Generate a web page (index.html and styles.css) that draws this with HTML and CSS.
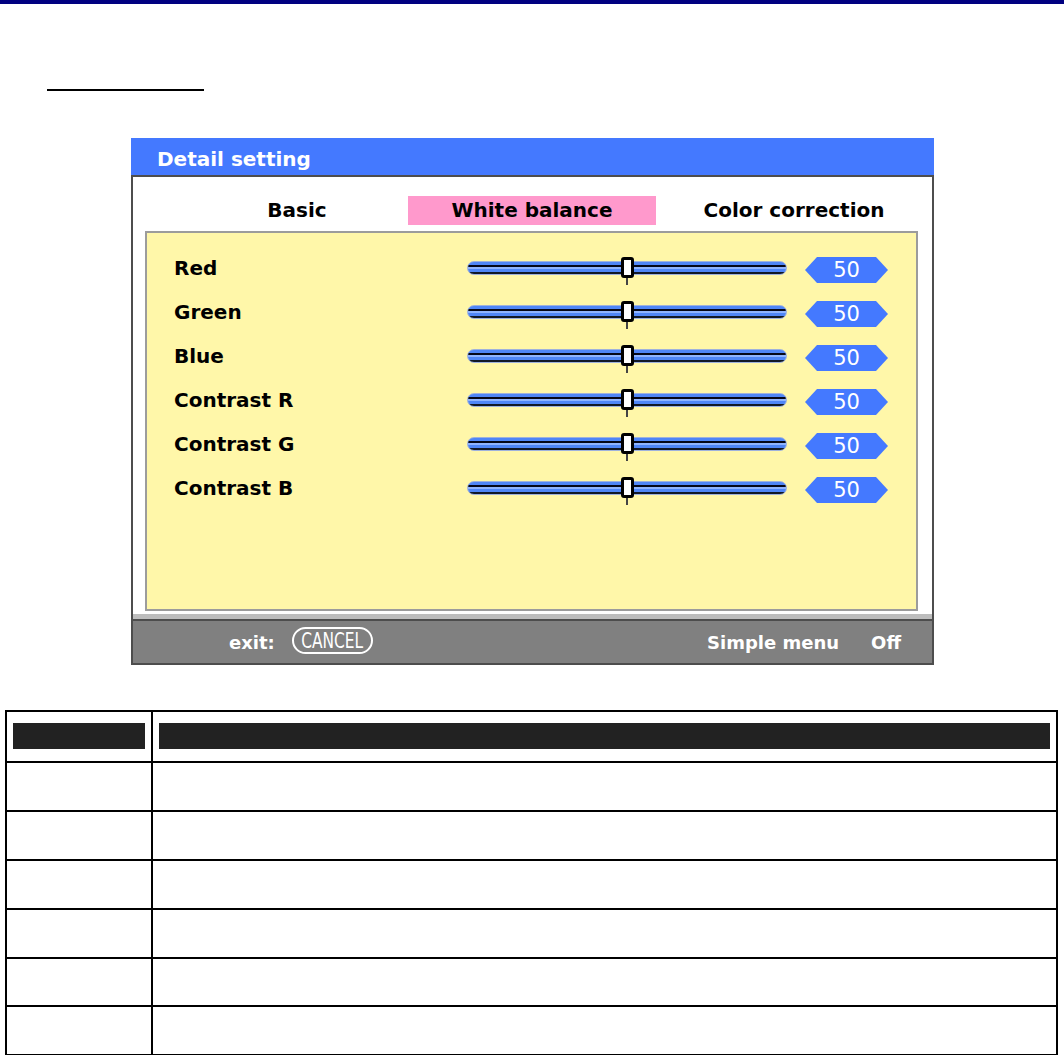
FILE: index.html
```html
<!DOCTYPE html>
<html lang="en">
<head>
    <meta charset="UTF-8">
    <meta name="viewport" content="width=device-width, initial-scale=1.0">
    <title>Detail setting - White balance</title>
    <link rel="stylesheet" href="styles.css">
</head>

<body>

    <!-- Page top rule -->
    <div class="top-bar"></div>

    <!-- Section heading (underline only) -->
    <div class="page-title"></div>

    <!-- OSD menu screen -->
    <div class="osd">
        <div class="osd-title">Detail setting</div>

        <div class="osd-body">
            <!-- Tabs -->
            <div class="tabs">
                <div class="tab tab-basic">Basic</div>
                <div class="tab tab-active">White balance</div>
                <div class="tab tab-color">Color correction</div>
            </div>

            <!-- Adjustment panel -->
            <div class="panel">
                <div class="row">
                    <div class="row-label">Red</div>
                    <div class="slider"><span class="thumb"></span></div>
                    <div class="value">50</div>
                </div>
                <div class="row">
                    <div class="row-label">Green</div>
                    <div class="slider"><span class="thumb"></span></div>
                    <div class="value">50</div>
                </div>
                <div class="row">
                    <div class="row-label">Blue</div>
                    <div class="slider"><span class="thumb"></span></div>
                    <div class="value">50</div>
                </div>
                <div class="row">
                    <div class="row-label">Contrast R</div>
                    <div class="slider"><span class="thumb"></span></div>
                    <div class="value">50</div>
                </div>
                <div class="row">
                    <div class="row-label">Contrast G</div>
                    <div class="slider"><span class="thumb"></span></div>
                    <div class="value">50</div>
                </div>
                <div class="row">
                    <div class="row-label">Contrast B</div>
                    <div class="slider"><span class="thumb"></span></div>
                    <div class="value">50</div>
                </div>
            </div>

            <div class="osd-sep"></div>

            <!-- Footer -->
            <div class="osd-footer">
                <span>exit:</span>
                <span class="cancel-btn"><span class="cancel-text">CANCEL</span></span>
                <span class="spacer"></span>
                <span>Simple menu</span>
                <span class="footer-value">Off</span>
            </div>
        </div>
    </div>

    <!-- Description table -->
    <div class="spec">
        <div class="spec-head"><div class="head-bar"></div></div>
        <div class="spec-head"><div class="head-bar"></div></div>

        <div class="spec-cell"></div>
        <div class="spec-cell"></div>
        <div class="spec-cell"></div>
        <div class="spec-cell"></div>
        <div class="spec-cell"></div>
        <div class="spec-cell"></div>
        <div class="spec-cell"></div>
        <div class="spec-cell"></div>
        <div class="spec-cell"></div>
        <div class="spec-cell"></div>
        <div class="spec-cell"></div>
        <div class="spec-cell"></div>
    </div>

</body>
</html>
```

FILE: styles.css
```css
/* Base styles */
body {
    margin: 0;
    padding: 0;
    background-color: #fff;
    font-family: "DejaVu Sans", "Liberation Sans", sans-serif;
    color: #000;
}

/* Top rule */
.top-bar {
    height: 4px;
    background: #000080;
}

.page-title {
    width: 157px;
    margin: 85px 0 0 47px;
    border-bottom: 2px solid #000;
}

/* OSD window */
.osd {
    width: 803px;
    margin: 47px 0 0 131px;
}

.osd-title {
    height: 37px;
    box-sizing: border-box;
    padding: 6px 0 0 26px;
    line-height: 31px;
    background: #4479ff;
    color: #fff;
    font-size: 20px;
    font-weight: bold;
}

.osd-body {
    border: 2px solid #4d4d4d;
    background: #fff;
}

/* Tabs */
.tabs {
    display: flex;
    height: 54px;
    box-sizing: border-box;
    padding: 19px 0 0 53px;
}

.tab {
    height: 29px;
    line-height: 29px;
    text-align: center;
    font-size: 20px;
    font-weight: bold;
}

.tab-basic {
    width: 222px;
}

.tab-active {
    width: 248px;
    background: #ff99cc;
}

.tab-color {
    flex: 1;
}

/* Panel */
.panel {
    height: 380px;
    box-sizing: border-box;
    margin: 0 14px 0 12px;
    padding: 13px 0 0 27px;
    border: 2px solid #9c9c9c;
    background: #fff7a9;
}

.row {
    display: flex;
    align-items: center;
    height: 44px;
}

.row-label {
    width: 293px;
    font-size: 20px;
    font-weight: bold;
}

/* Slider */
.slider {
    position: relative;
    width: 320px;
    height: 14px;
    box-sizing: border-box;
    border: 1px solid #9fb2dc;
    border-radius: 7px;
    background: linear-gradient(to bottom,
        #4f86f7 0, #4f86f7 3px,
        #05081a 3px, #05081a 5px,
        #8fb4ff 5px, #8fb4ff 7px,
        #4f86f7 7px, #4f86f7 10px,
        #111827 10px, #111827 12px);
}

.thumb {
    position: absolute;
    left: 50%;
    top: -5px;
    width: 13px;
    height: 21px;
    margin-left: -6px;
    box-sizing: border-box;
    border: 3px solid #000;
    border-radius: 3px;
    background: #fff;
}

.thumb::after {
    content: "";
    position: absolute;
    left: 2px;
    top: 18px;
    width: 2px;
    height: 7px;
    background: #444;
}

.value {
    width: 83px;
    height: 26px;
    margin: 4px 0 0 18px;
    line-height: 26px;
    text-align: center;
    background: #4479ff;
    color: #fff;
    font-size: 21px;
    clip-path: polygon(12px 0, calc(100% - 12px) 0, 100% 50%, calc(100% - 12px) 100%, 12px 100%, 0 50%);
}

/* Footer */
.osd-sep {
    height: 5px;
    margin-top: 3px;
    background: #bdbdbd;
    border-bottom: 2px solid #4d4d4d;
}

.osd-footer {
    display: flex;
    align-items: center;
    height: 42px;
    padding: 0 31px 0 96px;
    background: #808080;
    color: #fff;
    font-size: 18px;
    font-weight: bold;
}

.cancel-btn {
    display: flex;
    justify-content: center;
    align-items: center;
    width: 81px;
    height: 27px;
    margin: -3px 0 0 17px;
    box-sizing: border-box;
    border: 2px solid #fff;
    border-radius: 14px;
}

.cancel-text {
    display: inline-block;
    font-size: 22px;
    font-weight: normal;
    transform: scaleX(0.7);
}

.spacer {
    flex: 1;
}

.footer-value {
    margin-left: 32px;
}

/* Description table */
.spec {
    display: grid;
    grid-template-columns: 146px 1fr;
    grid-template-rows: 51px 49px 49px 49px 49px 48px 49px;
    width: 1053px;
    box-sizing: border-box;
    margin: 45px 0 0 5px;
    border-top: 2px solid #000;
    border-left: 2px solid #000;
}

.spec-head,
.spec-cell {
    border-right: 2px solid #000;
    border-bottom: 2px solid #000;
}

.spec-head {
    padding: 11px 6px 12px 6px;
}

.head-bar {
    height: 100%;
    background: #222;
}
```
